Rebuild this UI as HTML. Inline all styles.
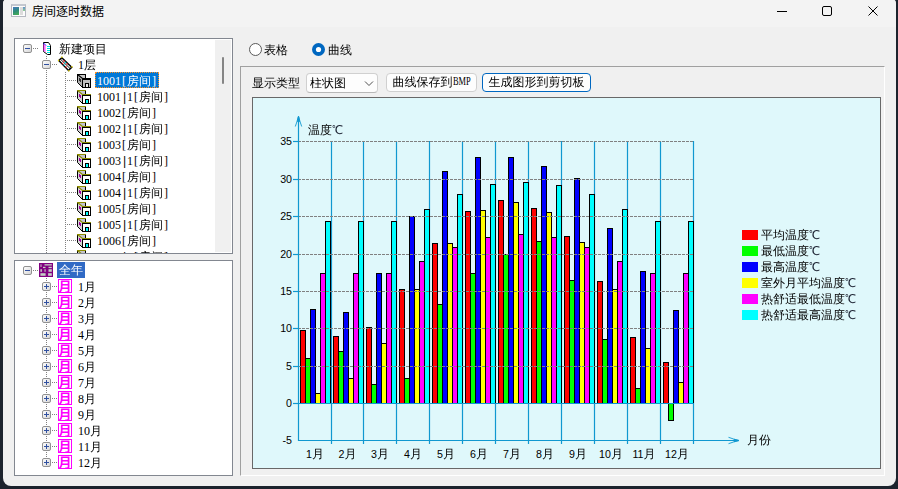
<!DOCTYPE html>
<html><head><meta charset="utf-8"><title>房间逐时数据</title>
<style>
html,body{margin:0;padding:0;}
body{width:898px;height:489px;overflow:hidden;background:#1c232d;position:relative;font-family:"Liberation Sans","WenQuanYi Zen Hei","Noto Sans CJK SC",sans-serif;font-size:12px;color:#000;}
#win{position:absolute;left:3px;top:0;width:893px;height:486px;background:#f0f0f0;border-radius:2px 2px 8px 8px / 5px 5px 8px 8px;overflow:hidden;}
#tbar{position:absolute;left:0;top:0;width:100%;height:27px;background:#f3f3f3;}
#title{position:absolute;font:12px "Liberation Sans","Noto Sans CJK SC",sans-serif;white-space:nowrap;}
.abs{position:absolute;}
.tree{position:absolute;background:#fff;border:1px solid #828790;box-sizing:border-box;overflow:hidden;}
.trow{position:absolute;height:16px;line-height:18px;white-space:nowrap;font-size:12px;}
.c{display:inline-block;width:6px;text-align:center;font-family:"Liberation Serif",serif;}
.p{font-family:"Liberation Mono",monospace}
.bmp{display:inline-block;width:18px;height:12px;vertical-align:baseline;position:relative}
.bmp span{position:absolute;left:0;bottom:-3px;line-height:16px;display:inline-block;transform:scaleX(.7);transform-origin:0 50%;font-family:"Liberation Serif",serif;}
.sel{background:#0078d7;color:#fff;display:inline-block;box-sizing:border-box;height:16px;line-height:16px;padding:0 1px;border:1px dotted #ff9020;}
.sel2{background:#316ac5;color:#fff;display:inline-block;height:16px;line-height:16px;padding:0 2px;}
svg{position:absolute;left:0;top:0;}
.num{position:absolute;font:10.67px/16px "Liberation Sans",sans-serif;white-space:nowrap;}
.lbl{position:absolute;font:12px/16px "Liberation Sans","WenQuanYi Zen Hei","Noto Sans CJK SC",sans-serif;white-space:nowrap;}
.lbl .n{font-size:10.67px;}
.k{}
.deg{color:#1a2030;}
.dot{stroke:#808080;stroke-width:1;stroke-dasharray:1,1;}
.btn{position:absolute;box-sizing:border-box;height:21px;line-height:19px;border:1px solid #d0d0d0;border-radius:4px;background:#fdfdfd;text-align:center;font-size:12px;white-space:nowrap;}
</style></head><body>
<div id="win">
<div id="tbar"></div>
</div>
<!-- everything absolutely positioned relative to body (page coords) -->
<div class="abs" style="left:11px;top:4px;width:15px;height:13px;background:#fcfcfc;border:1px solid #b4b8c0;border-top:2px solid #c4c8d0;box-sizing:border-box"><div style="position:absolute;left:1px;top:1px;width:6px;height:8px;background:linear-gradient(160deg,#4878c0,#2c8c78 50%,#48b050)"></div><div style="position:absolute;left:8px;top:1px;width:3px;height:8px;background:#dcdcdc"></div><div style="position:absolute;left:11px;top:1px;width:2px;height:4px;background:linear-gradient(#6090d0,#90d090)"></div></div>
<div id="title" style="left:32px;top:3px;line-height:18px">房间逐时数据</div>
<!-- window controls -->
<svg width="898" height="30" style="left:0;top:0"><g stroke="#000" stroke-width="1" fill="none">
<line x1="777" y1="11.5" x2="787" y2="11.5"/>
<rect x="822.5" y="6.5" width="9" height="9" rx="1.5"/>
<path d="M868.5 6.5 L877.5 15.5 M877.5 6.5 L868.5 15.5"/></g></svg>

<!-- tree 1 -->
<div class="tree" style="left:14px;top:38px;width:219px;height:216px"></div>
<div class="abs" style="left:15px;top:39px;width:217px;height:214px;overflow:hidden">
 <div style="position:absolute;left:-15px;top:-39px;width:300px;height:300px">
 <div class="trow" style="top:40px;left:59px">新建项目</div>
 <div class="trow" style="top:56px;left:78px"><span class="c">1</span>层</div>
 <div class="trow" style="top:72px;left:95px"><span class="sel"><span class="c">1</span><span class="c">0</span><span class="c">0</span><span class="c">1</span><span class="c">[</span>房间<span class="c">]</span></span></div>
<div class="trow" style="top:88px;left:97px"><span class="c">1</span><span class="c">0</span><span class="c">0</span><span class="c">1</span><span class="c p">|</span><span class="c">1</span><span class="c">[</span>房间<span class="c">]</span></div>
<div class="trow" style="top:104px;left:97px"><span class="c">1</span><span class="c">0</span><span class="c">0</span><span class="c">2</span><span class="c">[</span>房间<span class="c">]</span></div>
<div class="trow" style="top:120px;left:97px"><span class="c">1</span><span class="c">0</span><span class="c">0</span><span class="c">2</span><span class="c p">|</span><span class="c">1</span><span class="c">[</span>房间<span class="c">]</span></div>
<div class="trow" style="top:136px;left:97px"><span class="c">1</span><span class="c">0</span><span class="c">0</span><span class="c">3</span><span class="c">[</span>房间<span class="c">]</span></div>
<div class="trow" style="top:152px;left:97px"><span class="c">1</span><span class="c">0</span><span class="c">0</span><span class="c">3</span><span class="c p">|</span><span class="c">1</span><span class="c">[</span>房间<span class="c">]</span></div>
<div class="trow" style="top:168px;left:97px"><span class="c">1</span><span class="c">0</span><span class="c">0</span><span class="c">4</span><span class="c">[</span>房间<span class="c">]</span></div>
<div class="trow" style="top:184px;left:97px"><span class="c">1</span><span class="c">0</span><span class="c">0</span><span class="c">4</span><span class="c p">|</span><span class="c">1</span><span class="c">[</span>房间<span class="c">]</span></div>
<div class="trow" style="top:200px;left:97px"><span class="c">1</span><span class="c">0</span><span class="c">0</span><span class="c">5</span><span class="c">[</span>房间<span class="c">]</span></div>
<div class="trow" style="top:216px;left:97px"><span class="c">1</span><span class="c">0</span><span class="c">0</span><span class="c">5</span><span class="c p">|</span><span class="c">1</span><span class="c">[</span>房间<span class="c">]</span></div>
<div class="trow" style="top:232px;left:97px"><span class="c">1</span><span class="c">0</span><span class="c">0</span><span class="c">6</span><span class="c">[</span>房间<span class="c">]</span></div>
<div class="trow" style="top:248px;left:97px"><span class="c">1</span><span class="c">0</span><span class="c">0</span><span class="c">6</span><span class="c p">|</span><span class="c">1</span><span class="c">[</span>房间<span class="c">]</span></div>
 <svg width="240" height="300"><defs><linearGradient id="bg" x1="0" y1="0" x2="1" y2="1"><stop offset="0" stop-color="#fff"/><stop offset="1" stop-color="#d4d4d4"/></linearGradient></defs>
  <line x1="33" y1="48.5" x2="39" y2="48.5" class="dot"/>
  <line x1="46.5" y1="56" x2="46.5" y2="60" class="dot"/>
  <line x1="46.5" y1="70" x2="46.5" y2="260" class="dot"/>
  <line x1="52" y1="64.5" x2="57" y2="64.5" class="dot"/>
  <line x1="65.5" y1="72" x2="65.5" y2="260" class="dot"/>
  <line x1="67" y1="80.5" x2="76" y2="80.5" class="dot"/><line x1="67" y1="96.5" x2="76" y2="96.5" class="dot"/><line x1="67" y1="112.5" x2="76" y2="112.5" class="dot"/><line x1="67" y1="128.5" x2="76" y2="128.5" class="dot"/><line x1="67" y1="144.5" x2="76" y2="144.5" class="dot"/><line x1="67" y1="160.5" x2="76" y2="160.5" class="dot"/><line x1="67" y1="176.5" x2="76" y2="176.5" class="dot"/><line x1="67" y1="192.5" x2="76" y2="192.5" class="dot"/><line x1="67" y1="208.5" x2="76" y2="208.5" class="dot"/><line x1="67" y1="224.5" x2="76" y2="224.5" class="dot"/><line x1="67" y1="240.5" x2="76" y2="240.5" class="dot"/><line x1="67" y1="256.5" x2="76" y2="256.5" class="dot"/>
  <g transform="translate(23,44)"><rect x="0.5" y="0.5" width="8" height="8" rx="1.5" fill="url(#bg)" stroke="#919191"/><line x1="2" y1="4.5" x2="7" y2="4.5" stroke="#3050a0"/></g><g transform="translate(42,60)"><rect x="0.5" y="0.5" width="8" height="8" rx="1.5" fill="url(#bg)" stroke="#919191"/><line x1="2" y1="4.5" x2="7" y2="4.5" stroke="#3050a0"/></g>
  <g transform="translate(42,42)"><path d="M1.5 0.500 H6.5 L8.500 3.500 V12.500 H5.500 L1.500 9.500Z" fill="#fff" stroke="#000"/><path d="M2 2 V9 M3 3 V10" stroke="#ff40ff" stroke-width="1"/><path d="M1.5 1 L4 3.500" stroke="#2020ff"/><path d="M5 4.500H8M5 6.500H8M5 8.500H8M5 10.500H8" stroke="#00e0e0"/></g>
  <g transform="translate(58,57)"><path d="M0.8 3.500 L3.800 0.800 L13.700 10.200 L10.500 13.500Z" fill="#fff" stroke="#000" stroke-width="1.500"/><path d="M2.800 2.500 L12 11.500" stroke="#000" stroke-width="0.900"/><path d="M5.5 3.500 l1 1 M8.500 6.500 l1 1 M4 6 l1 1 M7.500 9.300 l1 1" stroke="#ff2020" stroke-width="1.200"/><path d="M7 5 l1 1 M5.800 7.700 l1 1" stroke="#00d0e0" stroke-width="1.200"/><path d="M3.300 0.200h1.200M0 3.500h1.200M13.300 9.800h1.200M10.300 13.800h1.200" stroke="#e8d800" stroke-width="1.400"/></g>
  <g transform="translate(77,74)"><path d="M1 1 H8 V4 H5 Z" fill="#c8c8c8"/><path d="M0.5 0.5 L5.5 5 V13.5 L0.5 8.5 Z" fill="#b0b0b0"/><path d="M0.5 1 V8.500 L5.500 13.500" fill="none" stroke="#000"/><rect x="5.500" y="5.500" width="8" height="8" fill="#c0c0c0" stroke="#000"/><path d="M8.5 1 V4" stroke="#000"/><path d="M0 0.500 H9" stroke="#000"/><path d="M0.5 0.500 L5.500 4.500 H14" stroke="#000" fill="none" stroke-width="1.2"/><path d="M2 4 h1 v1 h1 v3 h-1 v-1 h-1z" fill="#303030"/><rect x="8.500" y="9.500" width="3" height="4" fill="#e8e8e8" stroke="#000"/></g><g transform="translate(77,90)"><path d="M1 1 H8 V4 H5 Z" fill="#c4c4cc"/><path d="M0.5 0.5 L5.5 5 V13.5 L0.5 8.5 Z" fill="#d4d4d4"/><path d="M0.5 1 V8.500 L5.500 13.500" fill="none" stroke="#000"/><rect x="5.500" y="5.500" width="8" height="8" fill="#ffffff" stroke="#000"/><path d="M8.5 1 V4" stroke="#000"/><path d="M0 0.500 H9" stroke="#8c8c00"/><path d="M0.5 0.500 L5.500 4.500 H14" stroke="#8c8c00" fill="none" stroke-width="1.2"/><path d="M2 4 h1 v1 h1 v3 h-1 v-1 h-1z" fill="#a000a0"/><rect x="8.500" y="9.500" width="3" height="4" fill="#00ffff" stroke="#000"/></g><g transform="translate(77,106)"><path d="M1 1 H8 V4 H5 Z" fill="#c4c4cc"/><path d="M0.5 0.5 L5.5 5 V13.5 L0.5 8.5 Z" fill="#d4d4d4"/><path d="M0.5 1 V8.500 L5.500 13.500" fill="none" stroke="#000"/><rect x="5.500" y="5.500" width="8" height="8" fill="#ffffff" stroke="#000"/><path d="M8.5 1 V4" stroke="#000"/><path d="M0 0.500 H9" stroke="#8c8c00"/><path d="M0.5 0.500 L5.500 4.500 H14" stroke="#8c8c00" fill="none" stroke-width="1.2"/><path d="M2 4 h1 v1 h1 v3 h-1 v-1 h-1z" fill="#a000a0"/><rect x="8.500" y="9.500" width="3" height="4" fill="#00ffff" stroke="#000"/></g><g transform="translate(77,122)"><path d="M1 1 H8 V4 H5 Z" fill="#c4c4cc"/><path d="M0.5 0.5 L5.5 5 V13.5 L0.5 8.5 Z" fill="#d4d4d4"/><path d="M0.5 1 V8.500 L5.500 13.500" fill="none" stroke="#000"/><rect x="5.500" y="5.500" width="8" height="8" fill="#ffffff" stroke="#000"/><path d="M8.5 1 V4" stroke="#000"/><path d="M0 0.500 H9" stroke="#8c8c00"/><path d="M0.5 0.500 L5.500 4.500 H14" stroke="#8c8c00" fill="none" stroke-width="1.2"/><path d="M2 4 h1 v1 h1 v3 h-1 v-1 h-1z" fill="#a000a0"/><rect x="8.500" y="9.500" width="3" height="4" fill="#00ffff" stroke="#000"/></g><g transform="translate(77,138)"><path d="M1 1 H8 V4 H5 Z" fill="#c4c4cc"/><path d="M0.5 0.5 L5.5 5 V13.5 L0.5 8.5 Z" fill="#d4d4d4"/><path d="M0.5 1 V8.500 L5.500 13.500" fill="none" stroke="#000"/><rect x="5.500" y="5.500" width="8" height="8" fill="#ffffff" stroke="#000"/><path d="M8.5 1 V4" stroke="#000"/><path d="M0 0.500 H9" stroke="#8c8c00"/><path d="M0.5 0.500 L5.500 4.500 H14" stroke="#8c8c00" fill="none" stroke-width="1.2"/><path d="M2 4 h1 v1 h1 v3 h-1 v-1 h-1z" fill="#a000a0"/><rect x="8.500" y="9.500" width="3" height="4" fill="#00ffff" stroke="#000"/></g><g transform="translate(77,154)"><path d="M1 1 H8 V4 H5 Z" fill="#c4c4cc"/><path d="M0.5 0.5 L5.5 5 V13.5 L0.5 8.5 Z" fill="#d4d4d4"/><path d="M0.5 1 V8.500 L5.500 13.500" fill="none" stroke="#000"/><rect x="5.500" y="5.500" width="8" height="8" fill="#ffffff" stroke="#000"/><path d="M8.5 1 V4" stroke="#000"/><path d="M0 0.500 H9" stroke="#8c8c00"/><path d="M0.5 0.500 L5.500 4.500 H14" stroke="#8c8c00" fill="none" stroke-width="1.2"/><path d="M2 4 h1 v1 h1 v3 h-1 v-1 h-1z" fill="#a000a0"/><rect x="8.500" y="9.500" width="3" height="4" fill="#00ffff" stroke="#000"/></g><g transform="translate(77,170)"><path d="M1 1 H8 V4 H5 Z" fill="#c4c4cc"/><path d="M0.5 0.5 L5.5 5 V13.5 L0.5 8.5 Z" fill="#d4d4d4"/><path d="M0.5 1 V8.500 L5.500 13.500" fill="none" stroke="#000"/><rect x="5.500" y="5.500" width="8" height="8" fill="#ffffff" stroke="#000"/><path d="M8.5 1 V4" stroke="#000"/><path d="M0 0.500 H9" stroke="#8c8c00"/><path d="M0.5 0.500 L5.500 4.500 H14" stroke="#8c8c00" fill="none" stroke-width="1.2"/><path d="M2 4 h1 v1 h1 v3 h-1 v-1 h-1z" fill="#a000a0"/><rect x="8.500" y="9.500" width="3" height="4" fill="#00ffff" stroke="#000"/></g><g transform="translate(77,186)"><path d="M1 1 H8 V4 H5 Z" fill="#c4c4cc"/><path d="M0.5 0.5 L5.5 5 V13.5 L0.5 8.5 Z" fill="#d4d4d4"/><path d="M0.5 1 V8.500 L5.500 13.500" fill="none" stroke="#000"/><rect x="5.500" y="5.500" width="8" height="8" fill="#ffffff" stroke="#000"/><path d="M8.5 1 V4" stroke="#000"/><path d="M0 0.500 H9" stroke="#8c8c00"/><path d="M0.5 0.500 L5.500 4.500 H14" stroke="#8c8c00" fill="none" stroke-width="1.2"/><path d="M2 4 h1 v1 h1 v3 h-1 v-1 h-1z" fill="#a000a0"/><rect x="8.500" y="9.500" width="3" height="4" fill="#00ffff" stroke="#000"/></g><g transform="translate(77,202)"><path d="M1 1 H8 V4 H5 Z" fill="#c4c4cc"/><path d="M0.5 0.5 L5.5 5 V13.5 L0.5 8.5 Z" fill="#d4d4d4"/><path d="M0.5 1 V8.500 L5.500 13.500" fill="none" stroke="#000"/><rect x="5.500" y="5.500" width="8" height="8" fill="#ffffff" stroke="#000"/><path d="M8.5 1 V4" stroke="#000"/><path d="M0 0.500 H9" stroke="#8c8c00"/><path d="M0.5 0.500 L5.500 4.500 H14" stroke="#8c8c00" fill="none" stroke-width="1.2"/><path d="M2 4 h1 v1 h1 v3 h-1 v-1 h-1z" fill="#a000a0"/><rect x="8.500" y="9.500" width="3" height="4" fill="#00ffff" stroke="#000"/></g><g transform="translate(77,218)"><path d="M1 1 H8 V4 H5 Z" fill="#c4c4cc"/><path d="M0.5 0.5 L5.5 5 V13.5 L0.5 8.5 Z" fill="#d4d4d4"/><path d="M0.5 1 V8.500 L5.500 13.500" fill="none" stroke="#000"/><rect x="5.500" y="5.500" width="8" height="8" fill="#ffffff" stroke="#000"/><path d="M8.5 1 V4" stroke="#000"/><path d="M0 0.500 H9" stroke="#8c8c00"/><path d="M0.5 0.500 L5.500 4.500 H14" stroke="#8c8c00" fill="none" stroke-width="1.2"/><path d="M2 4 h1 v1 h1 v3 h-1 v-1 h-1z" fill="#a000a0"/><rect x="8.500" y="9.500" width="3" height="4" fill="#00ffff" stroke="#000"/></g><g transform="translate(77,234)"><path d="M1 1 H8 V4 H5 Z" fill="#c4c4cc"/><path d="M0.5 0.5 L5.5 5 V13.5 L0.5 8.5 Z" fill="#d4d4d4"/><path d="M0.5 1 V8.500 L5.500 13.500" fill="none" stroke="#000"/><rect x="5.500" y="5.500" width="8" height="8" fill="#ffffff" stroke="#000"/><path d="M8.5 1 V4" stroke="#000"/><path d="M0 0.500 H9" stroke="#8c8c00"/><path d="M0.5 0.500 L5.500 4.500 H14" stroke="#8c8c00" fill="none" stroke-width="1.2"/><path d="M2 4 h1 v1 h1 v3 h-1 v-1 h-1z" fill="#a000a0"/><rect x="8.500" y="9.500" width="3" height="4" fill="#00ffff" stroke="#000"/></g><g transform="translate(77,250)"><path d="M1 1 H8 V4 H5 Z" fill="#c4c4cc"/><path d="M0.5 0.5 L5.5 5 V13.5 L0.5 8.5 Z" fill="#d4d4d4"/><path d="M0.5 1 V8.500 L5.500 13.500" fill="none" stroke="#000"/><rect x="5.500" y="5.500" width="8" height="8" fill="#ffffff" stroke="#000"/><path d="M8.5 1 V4" stroke="#000"/><path d="M0 0.500 H9" stroke="#8c8c00"/><path d="M0.5 0.500 L5.500 4.500 H14" stroke="#8c8c00" fill="none" stroke-width="1.2"/><path d="M2 4 h1 v1 h1 v3 h-1 v-1 h-1z" fill="#a000a0"/><rect x="8.500" y="9.500" width="3" height="4" fill="#00ffff" stroke="#000"/></g>
 </svg>
 </div>
</div>
<!-- scrollbar of tree1 -->
<div class="abs" style="left:215px;top:40px;width:16px;height:212px;background:#f0f0f0"></div>
<div class="abs" style="left:222px;top:57px;width:2px;height:27px;background:#858585;border-radius:1px"></div>

<!-- tree 2 -->
<div class="tree" style="left:14px;top:260px;width:219px;height:216px"></div>
<div class="trow" style="top:262px;left:57px;line-height:16px"><span class="sel2">全年</span></div>
<div class="trow" style="top:278px;left:78px"><span class="c">1</span>月</div>
<div class="trow" style="top:294px;left:78px"><span class="c">2</span>月</div>
<div class="trow" style="top:310px;left:78px"><span class="c">3</span>月</div>
<div class="trow" style="top:326px;left:78px"><span class="c">4</span>月</div>
<div class="trow" style="top:342px;left:78px"><span class="c">5</span>月</div>
<div class="trow" style="top:358px;left:78px"><span class="c">6</span>月</div>
<div class="trow" style="top:374px;left:78px"><span class="c">7</span>月</div>
<div class="trow" style="top:390px;left:78px"><span class="c">8</span>月</div>
<div class="trow" style="top:406px;left:78px"><span class="c">9</span>月</div>
<div class="trow" style="top:422px;left:78px"><span class="c">1</span><span class="c">0</span>月</div>
<div class="trow" style="top:438px;left:78px"><span class="c">1</span><span class="c">1</span>月</div>
<div class="trow" style="top:454px;left:78px"><span class="c">1</span><span class="c">2</span>月</div>
<svg width="240" height="489">
 <line x1="33" y1="270.5" x2="39" y2="270.5" class="dot"/>
 <line x1="46.5" y1="278" x2="46.5" y2="463" class="dot"/>
 <g transform="translate(23,266)"><rect x="0.5" y="0.5" width="8" height="8" rx="1.5" fill="url(#bg)" stroke="#919191"/><line x1="2" y1="4.5" x2="7" y2="4.5" stroke="#3050a0"/></g>
 <g transform="translate(39,263)"><rect x="0" y="0" width="14" height="14" fill="#800080"/><g fill="#c4d0c4"><rect x="5.500" y="1.200" width="7.300" height="1.300"/><rect x="1.500" y="1.300" width="1" height="2.700"/><rect x="4" y="3.800" width="2.500" height="1.300"/><rect x="9.500" y="3.800" width="3.300" height="1.300"/><rect x="1.400" y="6.200" width="1.500" height="2.600"/><rect x="5.500" y="6.200" width="1.100" height="2.600"/><rect x="9.500" y="6.200" width="3.300" height="2.600"/><rect x="1.400" y="10.200" width="5.200" height="2.600"/><rect x="9.100" y="10.200" width="3.700" height="2.600"/></g></g>
 <g transform="translate(58,279)"><rect x="0.5" y="0.5" width="13" height="13" fill="#fff" stroke="#ff00ff" stroke-width="1"/><text x="7" y="12" text-anchor="middle" style="font:bold 13px 'Liberation Sans','Noto Sans CJK SC',sans-serif;fill:#ff00ff">月</text></g><g transform="translate(42,282)"><rect x="0.5" y="0.5" width="8" height="8" rx="1.5" fill="url(#bg)" stroke="#919191"/><line x1="2" y1="4.5" x2="7" y2="4.5" stroke="#3050a0"/><line x1="4.5" y1="2" x2="4.5" y2="7" stroke="#3050a0"/></g><line x1="52" y1="286.5" x2="57" y2="286.5" class="dot"/><g transform="translate(58,295)"><rect x="0.5" y="0.5" width="13" height="13" fill="#fff" stroke="#ff00ff" stroke-width="1"/><text x="7" y="12" text-anchor="middle" style="font:bold 13px 'Liberation Sans','Noto Sans CJK SC',sans-serif;fill:#ff00ff">月</text></g><g transform="translate(42,298)"><rect x="0.5" y="0.5" width="8" height="8" rx="1.5" fill="url(#bg)" stroke="#919191"/><line x1="2" y1="4.5" x2="7" y2="4.5" stroke="#3050a0"/><line x1="4.5" y1="2" x2="4.5" y2="7" stroke="#3050a0"/></g><line x1="52" y1="302.5" x2="57" y2="302.5" class="dot"/><g transform="translate(58,311)"><rect x="0.5" y="0.5" width="13" height="13" fill="#fff" stroke="#ff00ff" stroke-width="1"/><text x="7" y="12" text-anchor="middle" style="font:bold 13px 'Liberation Sans','Noto Sans CJK SC',sans-serif;fill:#ff00ff">月</text></g><g transform="translate(42,314)"><rect x="0.5" y="0.5" width="8" height="8" rx="1.5" fill="url(#bg)" stroke="#919191"/><line x1="2" y1="4.5" x2="7" y2="4.5" stroke="#3050a0"/><line x1="4.5" y1="2" x2="4.5" y2="7" stroke="#3050a0"/></g><line x1="52" y1="318.5" x2="57" y2="318.5" class="dot"/><g transform="translate(58,327)"><rect x="0.5" y="0.5" width="13" height="13" fill="#fff" stroke="#ff00ff" stroke-width="1"/><text x="7" y="12" text-anchor="middle" style="font:bold 13px 'Liberation Sans','Noto Sans CJK SC',sans-serif;fill:#ff00ff">月</text></g><g transform="translate(42,330)"><rect x="0.5" y="0.5" width="8" height="8" rx="1.5" fill="url(#bg)" stroke="#919191"/><line x1="2" y1="4.5" x2="7" y2="4.5" stroke="#3050a0"/><line x1="4.5" y1="2" x2="4.5" y2="7" stroke="#3050a0"/></g><line x1="52" y1="334.5" x2="57" y2="334.5" class="dot"/><g transform="translate(58,343)"><rect x="0.5" y="0.5" width="13" height="13" fill="#fff" stroke="#ff00ff" stroke-width="1"/><text x="7" y="12" text-anchor="middle" style="font:bold 13px 'Liberation Sans','Noto Sans CJK SC',sans-serif;fill:#ff00ff">月</text></g><g transform="translate(42,346)"><rect x="0.5" y="0.5" width="8" height="8" rx="1.5" fill="url(#bg)" stroke="#919191"/><line x1="2" y1="4.5" x2="7" y2="4.5" stroke="#3050a0"/><line x1="4.5" y1="2" x2="4.5" y2="7" stroke="#3050a0"/></g><line x1="52" y1="350.5" x2="57" y2="350.5" class="dot"/><g transform="translate(58,359)"><rect x="0.5" y="0.5" width="13" height="13" fill="#fff" stroke="#ff00ff" stroke-width="1"/><text x="7" y="12" text-anchor="middle" style="font:bold 13px 'Liberation Sans','Noto Sans CJK SC',sans-serif;fill:#ff00ff">月</text></g><g transform="translate(42,362)"><rect x="0.5" y="0.5" width="8" height="8" rx="1.5" fill="url(#bg)" stroke="#919191"/><line x1="2" y1="4.5" x2="7" y2="4.5" stroke="#3050a0"/><line x1="4.5" y1="2" x2="4.5" y2="7" stroke="#3050a0"/></g><line x1="52" y1="366.5" x2="57" y2="366.5" class="dot"/><g transform="translate(58,375)"><rect x="0.5" y="0.5" width="13" height="13" fill="#fff" stroke="#ff00ff" stroke-width="1"/><text x="7" y="12" text-anchor="middle" style="font:bold 13px 'Liberation Sans','Noto Sans CJK SC',sans-serif;fill:#ff00ff">月</text></g><g transform="translate(42,378)"><rect x="0.5" y="0.5" width="8" height="8" rx="1.5" fill="url(#bg)" stroke="#919191"/><line x1="2" y1="4.5" x2="7" y2="4.5" stroke="#3050a0"/><line x1="4.5" y1="2" x2="4.5" y2="7" stroke="#3050a0"/></g><line x1="52" y1="382.5" x2="57" y2="382.5" class="dot"/><g transform="translate(58,391)"><rect x="0.5" y="0.5" width="13" height="13" fill="#fff" stroke="#ff00ff" stroke-width="1"/><text x="7" y="12" text-anchor="middle" style="font:bold 13px 'Liberation Sans','Noto Sans CJK SC',sans-serif;fill:#ff00ff">月</text></g><g transform="translate(42,394)"><rect x="0.5" y="0.5" width="8" height="8" rx="1.5" fill="url(#bg)" stroke="#919191"/><line x1="2" y1="4.5" x2="7" y2="4.5" stroke="#3050a0"/><line x1="4.5" y1="2" x2="4.5" y2="7" stroke="#3050a0"/></g><line x1="52" y1="398.5" x2="57" y2="398.5" class="dot"/><g transform="translate(58,407)"><rect x="0.5" y="0.5" width="13" height="13" fill="#fff" stroke="#ff00ff" stroke-width="1"/><text x="7" y="12" text-anchor="middle" style="font:bold 13px 'Liberation Sans','Noto Sans CJK SC',sans-serif;fill:#ff00ff">月</text></g><g transform="translate(42,410)"><rect x="0.5" y="0.5" width="8" height="8" rx="1.5" fill="url(#bg)" stroke="#919191"/><line x1="2" y1="4.5" x2="7" y2="4.5" stroke="#3050a0"/><line x1="4.5" y1="2" x2="4.5" y2="7" stroke="#3050a0"/></g><line x1="52" y1="414.5" x2="57" y2="414.5" class="dot"/><g transform="translate(58,423)"><rect x="0.5" y="0.5" width="13" height="13" fill="#fff" stroke="#ff00ff" stroke-width="1"/><text x="7" y="12" text-anchor="middle" style="font:bold 13px 'Liberation Sans','Noto Sans CJK SC',sans-serif;fill:#ff00ff">月</text></g><g transform="translate(42,426)"><rect x="0.5" y="0.5" width="8" height="8" rx="1.5" fill="url(#bg)" stroke="#919191"/><line x1="2" y1="4.5" x2="7" y2="4.5" stroke="#3050a0"/><line x1="4.5" y1="2" x2="4.5" y2="7" stroke="#3050a0"/></g><line x1="52" y1="430.5" x2="57" y2="430.5" class="dot"/><g transform="translate(58,439)"><rect x="0.5" y="0.5" width="13" height="13" fill="#fff" stroke="#ff00ff" stroke-width="1"/><text x="7" y="12" text-anchor="middle" style="font:bold 13px 'Liberation Sans','Noto Sans CJK SC',sans-serif;fill:#ff00ff">月</text></g><g transform="translate(42,442)"><rect x="0.5" y="0.5" width="8" height="8" rx="1.5" fill="url(#bg)" stroke="#919191"/><line x1="2" y1="4.5" x2="7" y2="4.5" stroke="#3050a0"/><line x1="4.5" y1="2" x2="4.5" y2="7" stroke="#3050a0"/></g><line x1="52" y1="446.5" x2="57" y2="446.5" class="dot"/><g transform="translate(58,455)"><rect x="0.5" y="0.5" width="13" height="13" fill="#fff" stroke="#ff00ff" stroke-width="1"/><text x="7" y="12" text-anchor="middle" style="font:bold 13px 'Liberation Sans','Noto Sans CJK SC',sans-serif;fill:#ff00ff">月</text></g><g transform="translate(42,458)"><rect x="0.5" y="0.5" width="8" height="8" rx="1.5" fill="url(#bg)" stroke="#919191"/><line x1="2" y1="4.5" x2="7" y2="4.5" stroke="#3050a0"/><line x1="4.5" y1="2" x2="4.5" y2="7" stroke="#3050a0"/></g><line x1="52" y1="462.5" x2="57" y2="462.5" class="dot"/>
</svg>

<!-- radios -->
<svg width="898" height="70"><circle cx="255.5" cy="49.500" r="6" fill="#fff" stroke="#5a5a5a"/>
<circle cx="318.5" cy="49.5" r="6.5" fill="#0067c0"/><circle cx="318.5" cy="49.5" r="2.600" fill="#fff"/></svg>
<div class="trow" style="left:264px;top:42px;line-height:17px">表格</div>
<div class="trow" style="left:328px;top:42px;line-height:17px">曲线</div>

<!-- group box -->
<div class="abs" style="left:240px;top:66px;width:645px;height:410px;border:1px solid #a0a0a0;border-right-color:#fff;border-bottom-color:#fff;box-sizing:border-box"></div>
<div class="trow" style="left:252px;top:75px;line-height:16px">显示类型</div>
<div class="btn" style="left:306px;top:73px;width:72px;height:20px;line-height:18px;text-align:left;padding-left:3px;border-bottom-color:#b8b8b8">柱状图</div>
<svg width="898" height="100"><path d="M365 81.500 L369 85.500 L373 81.500" fill="none" stroke="#505050" stroke-width="1"/></svg>
<div class="btn" style="left:386px;top:73px;width:91px;height:19px;line-height:17px">曲线保存到<span class="bmp"><span>BMP</span></span></div>
<div class="btn" style="left:482px;top:73px;width:109px;height:19px;line-height:17px;border-color:#0067c0">生成图形到剪切板</div>

<!-- chart panel -->
<div class="abs" style="left:252px;top:97px;width:629px;height:372px;background:#dff8fb;border:1px solid #686868;box-sizing:border-box"></div>
<svg width="898" height="489">
<line x1="331.5" y1="141" x2="331.5" y2="444" stroke="#1098d0" stroke-width="1.2"/>
<line x1="363.5" y1="141" x2="363.5" y2="444" stroke="#1098d0" stroke-width="1.2"/>
<line x1="396.5" y1="141" x2="396.5" y2="444" stroke="#1098d0" stroke-width="1.2"/>
<line x1="429.5" y1="141" x2="429.5" y2="444" stroke="#1098d0" stroke-width="1.2"/>
<line x1="462.5" y1="141" x2="462.5" y2="444" stroke="#1098d0" stroke-width="1.2"/>
<line x1="495.5" y1="141" x2="495.5" y2="444" stroke="#1098d0" stroke-width="1.2"/>
<line x1="528.5" y1="141" x2="528.5" y2="444" stroke="#1098d0" stroke-width="1.2"/>
<line x1="561.5" y1="141" x2="561.5" y2="444" stroke="#1098d0" stroke-width="1.2"/>
<line x1="594.5" y1="141" x2="594.5" y2="444" stroke="#1098d0" stroke-width="1.2"/>
<line x1="627.5" y1="141" x2="627.5" y2="444" stroke="#1098d0" stroke-width="1.2"/>
<line x1="660.5" y1="141" x2="660.5" y2="444" stroke="#1098d0" stroke-width="1.2"/>
<line x1="693.5" y1="141" x2="693.5" y2="444" stroke="#1098d0" stroke-width="1.2"/>
<line x1="298.5" y1="117" x2="298.5" y2="441" stroke="#1098d0" stroke-width="1.2"/>
<path d="M295.3 126.5 Q297.0 122 298.5 116 Q300.0 122 301.7 126.5" fill="none" stroke="#1098d0" stroke-width="0.9"/>
<path d="M297.3 121.5 L298.5 116.5 L299.7 121.5Z" fill="#1098d0" stroke="#1098d0" stroke-width="0.8"/>
<line x1="298.0" y1="440.5" x2="739" y2="440.5" stroke="#1098d0" stroke-width="1.2"/>
<path d="M728.5 437.3 Q733 439 739 440.5 Q733 442 728.5 443.7" fill="none" stroke="#1098d0" stroke-width="0.9"/>
<path d="M734 439.3 L739 440.5 L734 441.700Z" fill="#1098d0" stroke="#1098d0" stroke-width="0.8"/>
<line x1="293" y1="403.5" x2="298.5" y2="403.5" stroke="#1098d0" stroke-width="1.2"/>
<line x1="293" y1="366.5" x2="298.5" y2="366.5" stroke="#1098d0" stroke-width="1.2"/>
<line x1="293" y1="328.5" x2="298.5" y2="328.5" stroke="#1098d0" stroke-width="1.2"/>
<line x1="293" y1="291.5" x2="298.5" y2="291.5" stroke="#1098d0" stroke-width="1.2"/>
<line x1="293" y1="254.5" x2="298.5" y2="254.5" stroke="#1098d0" stroke-width="1.2"/>
<line x1="293" y1="216.5" x2="298.5" y2="216.5" stroke="#1098d0" stroke-width="1.2"/>
<line x1="293" y1="179.5" x2="298.5" y2="179.5" stroke="#1098d0" stroke-width="1.2"/>
<line x1="293" y1="141.5" x2="298.5" y2="141.5" stroke="#1098d0" stroke-width="1.2"/>
<g stroke="#000" stroke-width="1" shape-rendering="crispEdges"><rect x="300.5" y="330.5" width="5" height="73" fill="#ff0000"/><rect x="305.5" y="358.5" width="5" height="45" fill="#00ff00"/><rect x="310.5" y="309.5" width="5" height="94" fill="#0000ff"/><rect x="315.5" y="393.5" width="5" height="10" fill="#ffff00"/><rect x="320.5" y="273.5" width="5" height="130" fill="#ff00ff"/><rect x="325.5" y="221.5" width="5" height="182" fill="#00ffff"/><rect x="333.5" y="336.5" width="5" height="67" fill="#ff0000"/><rect x="338.5" y="351.5" width="5" height="52" fill="#00ff00"/><rect x="343.5" y="312.5" width="5" height="91" fill="#0000ff"/><rect x="348.5" y="378.5" width="5" height="25" fill="#ffff00"/><rect x="353.5" y="273.5" width="5" height="130" fill="#ff00ff"/><rect x="358.5" y="221.5" width="5" height="182" fill="#00ffff"/><rect x="366.5" y="327.5" width="5" height="76" fill="#ff0000"/><rect x="371.5" y="384.5" width="5" height="19" fill="#00ff00"/><rect x="376.5" y="273.5" width="5" height="130" fill="#0000ff"/><rect x="381.5" y="343.5" width="5" height="60" fill="#ffff00"/><rect x="386.5" y="273.5" width="5" height="130" fill="#ff00ff"/><rect x="391.5" y="221.5" width="5" height="182" fill="#00ffff"/><rect x="399.5" y="289.5" width="5" height="114" fill="#ff0000"/><rect x="404.5" y="378.5" width="5" height="25" fill="#00ff00"/><rect x="409.5" y="216.5" width="5" height="187" fill="#0000ff"/><rect x="414.5" y="289.5" width="5" height="114" fill="#ffff00"/><rect x="419.5" y="261.5" width="5" height="142" fill="#ff00ff"/><rect x="424.5" y="209.5" width="5" height="194" fill="#00ffff"/><rect x="432.5" y="243.5" width="5" height="160" fill="#ff0000"/><rect x="437.5" y="304.5" width="5" height="99" fill="#00ff00"/><rect x="442.5" y="171.5" width="5" height="232" fill="#0000ff"/><rect x="447.5" y="243.5" width="5" height="160" fill="#ffff00"/><rect x="452.5" y="247.5" width="5" height="156" fill="#ff00ff"/><rect x="457.5" y="194.5" width="5" height="209" fill="#00ffff"/><rect x="465.5" y="211.5" width="5" height="192" fill="#ff0000"/><rect x="470.5" y="273.5" width="5" height="130" fill="#00ff00"/><rect x="475.5" y="157.5" width="5" height="246" fill="#0000ff"/><rect x="480.5" y="210.5" width="5" height="193" fill="#ffff00"/><rect x="485.5" y="237.5" width="5" height="166" fill="#ff00ff"/><rect x="490.5" y="184.5" width="5" height="219" fill="#00ffff"/><rect x="498.5" y="200.5" width="5" height="203" fill="#ff0000"/><rect x="503.5" y="254.5" width="5" height="149" fill="#00ff00"/><rect x="508.5" y="157.5" width="5" height="246" fill="#0000ff"/><rect x="513.5" y="202.5" width="5" height="201" fill="#ffff00"/><rect x="518.5" y="234.5" width="5" height="169" fill="#ff00ff"/><rect x="523.5" y="182.5" width="5" height="221" fill="#00ffff"/><rect x="531.5" y="208.5" width="5" height="195" fill="#ff0000"/><rect x="536.5" y="241.5" width="5" height="162" fill="#00ff00"/><rect x="541.5" y="166.5" width="5" height="237" fill="#0000ff"/><rect x="546.5" y="212.5" width="5" height="191" fill="#ffff00"/><rect x="551.5" y="237.5" width="5" height="166" fill="#ff00ff"/><rect x="556.5" y="185.5" width="5" height="218" fill="#00ffff"/><rect x="564.5" y="236.5" width="5" height="167" fill="#ff0000"/><rect x="569.5" y="280.5" width="5" height="123" fill="#00ff00"/><rect x="574.5" y="178.5" width="5" height="225" fill="#0000ff"/><rect x="579.5" y="242.5" width="5" height="161" fill="#ffff00"/><rect x="584.5" y="247.5" width="5" height="156" fill="#ff00ff"/><rect x="589.5" y="194.5" width="5" height="209" fill="#00ffff"/><rect x="597.5" y="281.5" width="5" height="122" fill="#ff0000"/><rect x="602.5" y="339.5" width="5" height="64" fill="#00ff00"/><rect x="607.5" y="228.5" width="5" height="175" fill="#0000ff"/><rect x="612.5" y="289.5" width="5" height="114" fill="#ffff00"/><rect x="617.5" y="261.5" width="5" height="142" fill="#ff00ff"/><rect x="622.5" y="209.5" width="5" height="194" fill="#00ffff"/><rect x="630.5" y="337.5" width="5" height="66" fill="#ff0000"/><rect x="635.5" y="388.5" width="5" height="15" fill="#00ff00"/><rect x="640.5" y="271.5" width="5" height="132" fill="#0000ff"/><rect x="645.5" y="348.5" width="5" height="55" fill="#ffff00"/><rect x="650.5" y="273.5" width="5" height="130" fill="#ff00ff"/><rect x="655.5" y="221.5" width="5" height="182" fill="#00ffff"/><rect x="663.5" y="362.5" width="5" height="41" fill="#ff0000"/><rect x="668.5" y="403.5" width="5" height="17" fill="#00ff00"/><rect x="673.5" y="310.5" width="5" height="93" fill="#0000ff"/><rect x="678.5" y="382.5" width="5" height="21" fill="#ffff00"/><rect x="683.5" y="273.5" width="5" height="130" fill="#ff00ff"/><rect x="688.5" y="221.5" width="5" height="182" fill="#00ffff"/></g>
<line x1="299" y1="366.5" x2="694" y2="366.5" stroke="#808080" stroke-width="1" stroke-dasharray="3,1" stroke-dashoffset="1" shape-rendering="crispEdges"/>
<line x1="299" y1="328.5" x2="694" y2="328.5" stroke="#808080" stroke-width="1" stroke-dasharray="3,1" stroke-dashoffset="1" shape-rendering="crispEdges"/>
<line x1="299" y1="291.5" x2="694" y2="291.5" stroke="#808080" stroke-width="1" stroke-dasharray="3,1" stroke-dashoffset="1" shape-rendering="crispEdges"/>
<line x1="299" y1="254.5" x2="694" y2="254.5" stroke="#808080" stroke-width="1" stroke-dasharray="3,1" stroke-dashoffset="1" shape-rendering="crispEdges"/>
<line x1="299" y1="216.5" x2="694" y2="216.5" stroke="#808080" stroke-width="1" stroke-dasharray="3,1" stroke-dashoffset="1" shape-rendering="crispEdges"/>
<line x1="299" y1="179.5" x2="694" y2="179.5" stroke="#808080" stroke-width="1" stroke-dasharray="3,1" stroke-dashoffset="1" shape-rendering="crispEdges"/>
<line x1="299" y1="141.5" x2="694" y2="141.5" stroke="#808080" stroke-width="1" stroke-dasharray="3,1" stroke-dashoffset="1" shape-rendering="crispEdges"/>
<line x1="298.5" y1="403.5" x2="694" y2="403.5" stroke="#1098d0" stroke-width="1.2"/>
<rect x="742" y="230" width="16" height="10" fill="#ff0000" shape-rendering="crispEdges"/>
<rect x="742" y="246" width="16" height="10" fill="#00ff00" shape-rendering="crispEdges"/>
<rect x="742" y="262" width="16" height="10" fill="#0000ff" shape-rendering="crispEdges"/>
<rect x="742" y="278" width="16" height="10" fill="#ffff00" shape-rendering="crispEdges"/>
<rect x="742" y="294" width="16" height="10" fill="#ff00ff" shape-rendering="crispEdges"/>
<rect x="742" y="310" width="16" height="10" fill="#00ffff" shape-rendering="crispEdges"/>
</svg>
<div class="num" style="left:252px;top:432.0px;width:40px;text-align:right">-5</div>
<div class="num" style="left:252px;top:395.0px;width:40px;text-align:right">0</div>
<div class="num" style="left:252px;top:358.0px;width:40px;text-align:right">5</div>
<div class="num" style="left:252px;top:320.0px;width:40px;text-align:right">10</div>
<div class="num" style="left:252px;top:283.0px;width:40px;text-align:right">15</div>
<div class="num" style="left:252px;top:246.0px;width:40px;text-align:right">20</div>
<div class="num" style="left:252px;top:208.0px;width:40px;text-align:right">25</div>
<div class="num" style="left:252px;top:171.0px;width:40px;text-align:right">30</div>
<div class="num" style="left:252px;top:133.0px;width:40px;text-align:right">35</div>
<div class="lbl" style="left:295.0px;top:446px;width:40px;text-align:center"><span class="n">1</span>月</div>
<div class="lbl" style="left:327.5px;top:446px;width:40px;text-align:center"><span class="n">2</span>月</div>
<div class="lbl" style="left:360.0px;top:446px;width:40px;text-align:center"><span class="n">3</span>月</div>
<div class="lbl" style="left:393.0px;top:446px;width:40px;text-align:center"><span class="n">4</span>月</div>
<div class="lbl" style="left:426.0px;top:446px;width:40px;text-align:center"><span class="n">5</span>月</div>
<div class="lbl" style="left:459.0px;top:446px;width:40px;text-align:center"><span class="n">6</span>月</div>
<div class="lbl" style="left:492.0px;top:446px;width:40px;text-align:center"><span class="n">7</span>月</div>
<div class="lbl" style="left:525.0px;top:446px;width:40px;text-align:center"><span class="n">8</span>月</div>
<div class="lbl" style="left:558.0px;top:446px;width:40px;text-align:center"><span class="n">9</span>月</div>
<div class="lbl" style="left:591.0px;top:446px;width:40px;text-align:center"><span class="n">10</span>月</div>
<div class="lbl" style="left:624.0px;top:446px;width:40px;text-align:center"><span class="n">11</span>月</div>
<div class="lbl" style="left:657.0px;top:446px;width:40px;text-align:center"><span class="n">12</span>月</div>
<div class="lbl" style="left:308px;top:122px">温度<span class="deg">℃</span></div>
<div class="lbl" style="left:747px;top:432px">月份</div>
<div class="lbl k" style="left:761px;top:227px">平均温度<span class="deg">℃</span></div>
<div class="lbl k" style="left:761px;top:243px">最低温度<span class="deg">℃</span></div>
<div class="lbl k" style="left:761px;top:259px">最高温度<span class="deg">℃</span></div>
<div class="lbl k" style="left:761px;top:275px">室外月平均温度<span class="deg">℃</span></div>
<div class="lbl k" style="left:761px;top:291px">热舒适最低温度<span class="deg">℃</span></div>
<div class="lbl k" style="left:761px;top:307px">热舒适最高温度<span class="deg">℃</span></div>
</body></html>
